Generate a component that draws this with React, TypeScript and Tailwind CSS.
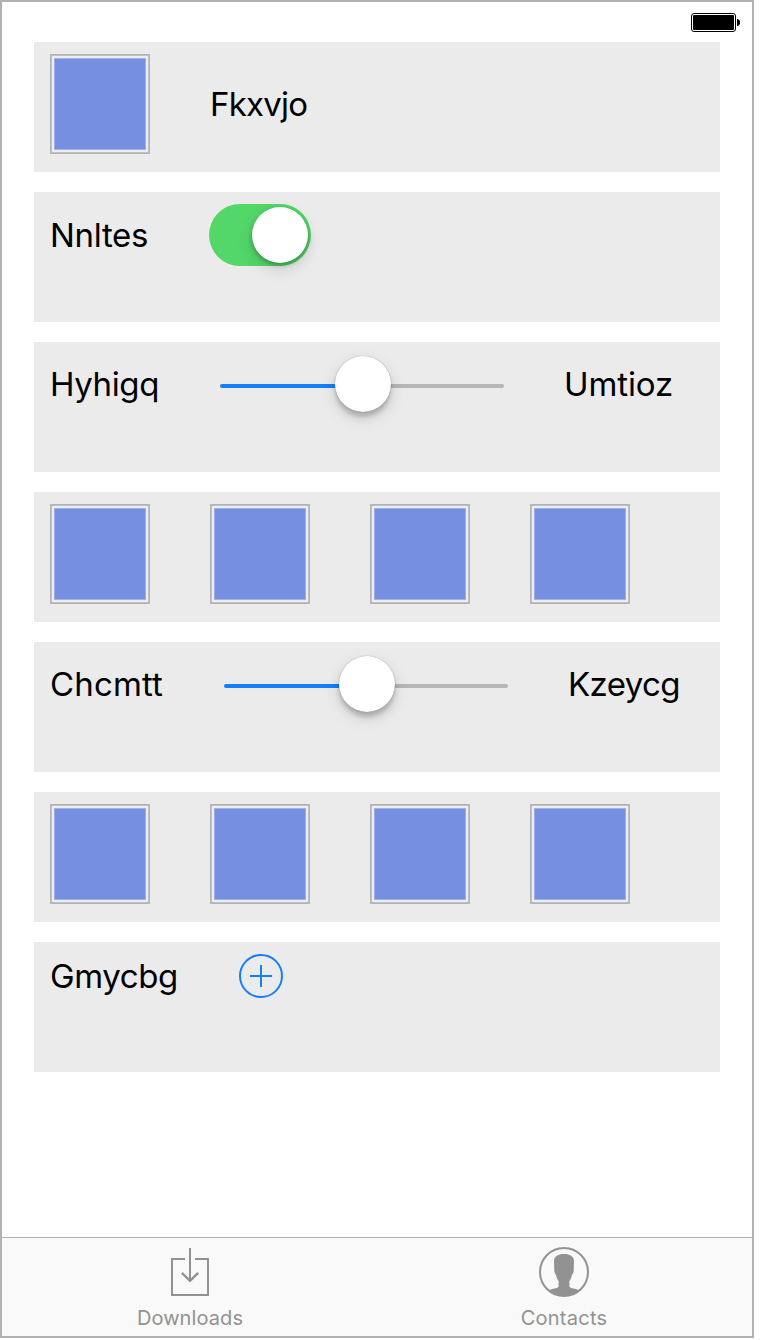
import type { ReactNode } from "react";

function Row({ children }: { children: ReactNode }) {
  return (
    <div className="h-[130px] bg-[#ebebeb] pt-3 pl-4">
      <div className="flex items-center gap-[60px]">{children}</div>
    </div>
  );
}

function Label({ text, className }: { text: string; className: string }) {
  return (
    <span className={`shrink-0 whitespace-nowrap text-[33px] leading-10 text-black ${className}`}>
      {text}
    </span>
  );
}

function Swatch() {
  return (
    <div className="size-[100px] shrink-0 border border-[#b4b4b4] bg-[#ebeef8] p-0">
      <div className="size-full border border-[#c0c0c0] p-0.5">
        <div className="size-full border border-[#a0b0ea] bg-[#768fe1]" />
      </div>
    </div>
  );
}

function Switch() {
  return (
    <div className="flex h-[62px] w-[102px] items-start justify-end rounded-full bg-[#53d769] p-[3px]">
      <div className="size-14 rounded-full bg-white shadow-[0_6px_16px_rgba(0,0,0,0.15),0_2px_4px_rgba(0,0,0,0.28)]" />
    </div>
  );
}

function Slider() {
  return (
    <div className="flex h-[60px] w-[284px] shrink-0 items-center">
      <div className="mt-1 h-1 w-[115px] rounded-l-full bg-[#157efb]" />
      <div className="z-10 -mr-px size-14 shrink-0 rounded-full bg-white shadow-[0_0_1px_rgba(0,0,0,0.4),0_6px_16px_rgba(0,0,0,0.14),0_5px_4px_rgba(0,0,0,0.18)]" />
      <div className="mt-1 h-1 flex-1 rounded-r-full bg-[#b6b6b6]" />
    </div>
  );
}

function Battery() {
  return (
    <svg width="50" height="20" viewBox="0 0 50 20">
      <rect x="1.5" y="1.5" width="44" height="18" rx="2.5" fill="#fff" stroke="#000" />
      <rect x="3" y="3" width="41" height="15" rx="1" />
      <path d="M47 7h1l2 2v3l-2 2h-1z" />
    </svg>
  );
}

function DownloadIcon() {
  return (
    <svg width="38" height="50" viewBox="0 0 38 50" fill="none" stroke="#929292" strokeWidth="2">
      <path d="M14 12H1v36h36V12H24M19 1v32" />
      <path d="M10.800 25.800l8.200 8 8.200-8" strokeWidth="2.400" />
    </svg>
  );
}

function ContactIcon() {
  return (
    <svg width="50" height="50" viewBox="0 0 50 50">
      <circle cx="25" cy="25" r="24" fill="none" stroke="#929292" strokeWidth="2" />
      <path
        fill="#929292"
        d="M9.500 43.500C13.500 41 18.500 42 19.600 39.500V34C18 32 17.400 30 17 27.800 15.800 27 15.200 24.500 15.200 22.500L15 13.500C15.300 9.500 19 7 25 7s9.700 2.500 10 6.500L34.800 22.500C34.800 24.500 34.200 27 33 27.800 32.600 30 32 32 30.400 34v5.500C31.500 42 36.500 41 40.500 43.500 36.500 47.500 31 49 25 49S13.500 47.500 9.500 43.500z"
      />
    </svg>
  );
}

function Tab({ text, className, children }: { text: string; className: string; children: ReactNode }) {
  return (
    <div className={`flex flex-col items-center pt-[9px] text-[#929292] ${className}`}>
      {children}
      <span className="mt-[9px] text-[20px] leading-6">{text}</span>
    </div>
  );
}

export default function App() {
  return (
    <div className="h-[1340px] w-[760px] bg-white font-['Inter',sans-serif]">
      <div className="flex h-[1338px] w-[754px] flex-col border-2 border-[#b2b2b2]">
        <div className="flex h-10 shrink-0 justify-end pt-2.5 pr-3">
          <Battery />
        </div>
        <div className="flex flex-1 flex-col gap-5 px-8">
          <Row>
            <Swatch />
            <Label text="Fkxvjo" className="w-[98px] tracking-[-0.8px]" />
          </Row>
          <Row>
            <Label text="Nnltes" className="w-[99px] tracking-[-0.3px]" />
            <Switch />
          </Row>
          <Row>
            <Label text="Hyhigq" className="w-[110px] tracking-[-0.4px]" />
            <Slider />
            <Label text="Umtioz" className="w-[108px] tracking-[-0.1px]" />
          </Row>
          <Row>
            <Swatch />
            <Swatch />
            <Swatch />
            <Swatch />
          </Row>
          <Row>
            <Label text="Chcmtt" className="w-[114px] tracking-[0.15px]" />
            <Slider />
            <Label text="Kzeycg" className="w-[112px] tracking-[-0.6px]" />
          </Row>
          <Row>
            <Swatch />
            <Swatch />
            <Swatch />
            <Swatch />
          </Row>
          <Row>
            <Label text="Gmycbg" className="w-[129px] tracking-[-0.4px]" />
            <svg width="44" height="44" viewBox="0 0 44 44" fill="none" stroke="#157efb" strokeWidth="2">
              <circle cx="22" cy="22" r="21" />
              <path d="M11 22h22M22 11v22" />
            </svg>
          </Row>
        </div>
        <div className="flex h-[99px] shrink-0 border-t border-[#b2b2b2] bg-[#f9f9f9]">
          <Tab text="Downloads" className="w-[376px] tracking-[0.1px]">
            <DownloadIcon />
          </Tab>
          <Tab text="Contacts" className="w-[372px] tracking-[0.25px]">
            <ContactIcon />
          </Tab>
        </div>
      </div>
    </div>
  );
}
